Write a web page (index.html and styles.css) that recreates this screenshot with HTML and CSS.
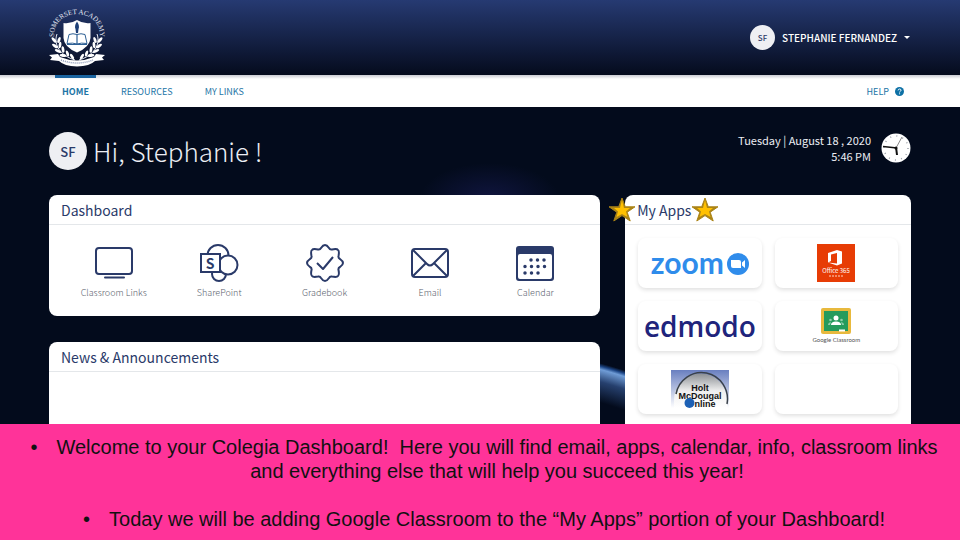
FILE: index.html
```
<!DOCTYPE html>
<html lang="en">
<head>
  <meta charset="UTF-8">
  <meta name="viewport" content="width=device-width, initial-scale=1.0">
  <title>Colegia - Dashboard</title>
  <link rel="stylesheet" href="styles.css">
</head>
<body>
  <header class="top-bar">
    <a class="crest" href="#" aria-label="Somerset Academy">
      <svg width="56" height="58" viewBox="0 0 56 58">
        <defs>
          <path id="crest-arc" d="M5 29C3 -3 53 -3 51 29"/>
          <g id="branch">
            <path d="M8 25C4 36 12 47 26 51" fill="none" stroke="#e8ecf6" stroke-width="1"/>
            <g fill="#fff">
              <ellipse cx="5" cy="31" rx="1.400" ry="3.400" transform="rotate(-40 5 31)"/>
              <ellipse cx="10" cy="31" rx="1.400" ry="3.200" transform="rotate(20 10 31)"/>
              <ellipse cx="6" cy="37" rx="1.400" ry="3.400" transform="rotate(-55 6 37)"/>
              <ellipse cx="11" cy="36" rx="1.400" ry="3.200" transform="rotate(5 11 36)"/>
              <ellipse cx="9" cy="42" rx="1.400" ry="3.400" transform="rotate(-65 9 42)"/>
              <ellipse cx="14" cy="40.500" rx="1.400" ry="3.200" transform="rotate(-8 14 40.500)"/>
              <ellipse cx="14" cy="46.500" rx="1.400" ry="3.400" transform="rotate(-80 14 46.500)"/>
              <ellipse cx="18.500" cy="44.500" rx="1.400" ry="3.200" transform="rotate(-20 18.500 44.500)"/>
              <ellipse cx="23" cy="47.500" rx="1.400" ry="3" transform="rotate(-35 23 47.500)"/>
            </g>
          </g>
        </defs>
        <text class="crest-name"><textPath href="#crest-arc" startOffset="50%" text-anchor="middle">SOMERSET ACADEMY</textPath></text>
        <use href="#branch"/>
        <use href="#branch" transform="translate(56 0) scale(-1 1)"/>
        <path d="M14.500 14Q22 15 28 11Q34 15 41.500 14V29Q41 38 28 43.500Q15 38 14.500 29Z" fill="#fff"/>
        <path d="M20 25.500Q24 24 28 25.500Q32 24 36 25.500L38 34.500Q32 33.500 28 35Q24 33.500 18 34.500Z" fill="#fff" stroke="#2d5f94" stroke-width="1"/>
        <path d="M28 25.500V35M18 35.500H38" stroke="#2d5f94" stroke-width="1.200"/>
        <path d="M28 12.500Q31 17 29.500 20L29 24H27L26.500 20Q25 17 28 12.500Z" fill="#1d3f77"/>
        <path d="M0 46L9 45L11 48Q28 55 45 48L47 45L56 46L53 48.500L55 51L46 52Q41 57 28 57.500Q15 57 10 52L1 51L3 48.500Z" fill="#fff"/>
        <path d="M12 51Q28 57 44 51" fill="none" stroke="#8e9ab8" stroke-width="1.500" stroke-dasharray="1 1"/>
      </svg>
    </a>
    <button class="user-menu" type="button">
      <span class="avatar avatar-small">SF</span>
      <span>STEPHANIE FERNANDEZ</span>
      <svg width="6" height="4" viewBox="0 0 6 4"><path d="M0 0H6L3 3Z" fill="#fff"/></svg>
    </button>
  </header>

  <nav class="nav-bar">
    <a class="active" href="#">HOME</a>
    <a href="#">RESOURCES</a>
    <a href="#">MY LINKS</a>
    <a class="help" href="#">HELP
      <svg width="9" height="9" viewBox="0 0 9 9">
        <circle cx="4.500" cy="4.500" r="4.500" fill="#0d70a5"/>
        <path d="M3.100 3.400Q3.200 2 4.500 2Q6 2 6 3.300Q6 4 4.600 4.900V5.400M4.600 6.300V7.300" fill="none" stroke="#fff" stroke-width="1"/>
      </svg>
    </a>
  </nav>

  <main class="content">
    <div class="greeting">
      <span class="avatar">SF</span>
      <h1>Hi, Stephanie !</h1>
      <div class="date-time">
        <div class="date">Tuesday | August 18 , 2020<br>5:46 PM</div>
        <svg width="30" height="30" viewBox="0 0 30 30">
          <circle cx="15" cy="15" r="14.500" fill="#fff"/>
          <circle cx="15" cy="15" r="12" fill="none" stroke="#9ba0a8" stroke-width="1.500" stroke-dasharray="1 5.283"/>
          <path d="M15 15L21 4" stroke="#888" stroke-width="1"/>
          <path d="M16 15L2 13.500" stroke="#111" stroke-width="1.500"/>
          <path d="M15 14L16 22" stroke="#111" stroke-width="2"/>
          <circle cx="15" cy="15" r="1.500" fill="#111"/>
        </svg>
      </div>
    </div>

    <div class="panels">
      <div class="left-column">
        <section class="card">
          <h2>Dashboard</h2>
          <div class="shortcuts">
            <a href="#">
              <svg width="40" height="40" viewBox="0 0 40 40" fill="none" stroke="#2a3a69" stroke-width="2">
                <rect x="2" y="5" width="36" height="26" rx="3"/>
                <path d="M11 34.500H30" stroke-linecap="round"/>
              </svg>
              Classroom Links
            </a>
            <a href="#">
              <svg width="40" height="40" viewBox="0 0 40 40" fill="#fff" stroke="#2a3a69" stroke-width="2">
                <circle cx="19" cy="12.500" r="10.500"/>
                <circle cx="20" cy="31" r="7"/>
                <circle cx="29" cy="22" r="9.500"/>
                <rect x="2" y="11" width="19" height="18"/>
                <text class="sharepoint-mark" x="11" y="26" text-anchor="middle">S</text>
              </svg>
              SharePoint
            </a>
            <a href="#">
              <svg width="40" height="40" viewBox="0 0 40 40" fill="none" stroke="#2a3a69" stroke-width="2" stroke-linejoin="round">
                <path d="M20 2Q22 2 24 5Q25 7 27 6.500Q32 5.500 33 7Q34.500 8 33.500 13Q33 15 35 16Q38 18 38 20Q38 22 35 24Q33 25 33.500 27Q34.500 32 33 33Q32 34.500 27 33.500Q25 33 24 35Q22 38 20 38Q18 38 16 35Q15 33 13 33.500Q8 34.500 7 33Q5.500 32 6.500 27Q7 25 5 24Q2 22 2 20Q2 18 5 16Q7 15 6.500 13Q5.500 8 7 7Q8 5.500 13 6.500Q15 7 16 5Q18 2 20 2Z"/>
                <path d="M12 20L18 26L28 14"/>
              </svg>
              Gradebook
            </a>
            <a href="#">
              <svg width="40" height="40" viewBox="0 0 40 40" fill="none" stroke="#2a3a69" stroke-width="2">
                <rect x="2" y="6" width="36" height="28" rx="3"/>
                <path d="M3 7L17 21Q20 24 23 21L37 7M3 33L16 20M37 33L24 20"/>
              </svg>
              Email
            </a>
            <a href="#">
              <svg width="40" height="40" viewBox="0 0 40 40" fill="#2a3a69">
                <rect x="1" y="3" width="38" height="35" rx="3"/>
                <rect x="3" y="11" width="34" height="25" rx="2" fill="#fff"/>
                <path d="M16 17H33M10 23.500H33M10 30H24" stroke="#2a3a69" stroke-width="3.500" stroke-linecap="round" stroke-dasharray="0 6.500"/>
              </svg>
              Calendar
            </a>
          </div>
        </section>

        <section class="card news">
          <h2>News &amp; Announcements</h2>
        </section>
      </div>

      <section class="card my-apps">
        <h2>My Apps</h2>
        <svg class="star star-left" width="28" height="26" viewBox="0 0 28 26">
          <path d="M14 1L17.300 9.800H27L19.200 15.200L22.200 24L14 18.600L5.800 24L8.800 15.200L1 9.800H10.700Z" fill="#ab8416" stroke="#ab8416" stroke-width="1"/>
          <path d="M14 3L16 11L22 11L18 14.500L19.500 20L14 17L8.500 20L10 14.500L6 11L12 11Z" fill="#ffc000"/>
        </svg>
        <svg class="star star-right" width="28" height="26" viewBox="0 0 28 26">
          <path d="M14 1L17.300 9.800H27L19.200 15.200L22.200 24L14 18.600L5.800 24L8.800 15.200L1 9.800H10.700Z" fill="#ab8416" stroke="#ab8416" stroke-width="1"/>
          <path d="M14 3L16 11L22 11L18 14.500L19.500 20L14 17L8.500 20L10 14.500L6 11L12 11Z" fill="#ffc000"/>
        </svg>
        <div class="apps">
          <a class="zoom" href="#">
            <span>zoom</span>
            <svg width="22" height="22" viewBox="0 0 22 22">
              <circle cx="11" cy="11" r="11" fill="#2f8ceb"/>
              <path d="M4 7H12Q14 7 14 9V15H6Q4 15 4 13ZM15 9.500L18 7V15L15 12.500Z" fill="#fff"/>
            </svg>
          </a>
          <a href="#" aria-label="Office 365">
            <svg width="38" height="38" viewBox="0 0 38 38">
              <rect width="38" height="38" fill="#e73c05"/>
              <path d="M11 9L20 6L25 7.500V19.500L20 21.500L11 18.500L20 19.500V9L14 10.500V17L11 18.500Z" fill="#fff"/>
              <text class="office-name" x="19" y="29" text-anchor="middle">Office 365</text>
              <path d="M12 32H26" stroke="#ffd5c5" stroke-width="1" stroke-dasharray="2 1"/>
            </svg>
          </a>
          <a class="edmodo" href="#">edmodo</a>
          <a class="classroom" href="#">
            <svg width="30" height="26" viewBox="0 0 30 26">
              <rect width="30" height="26" rx="2" fill="#e8b93d"/>
              <rect x="3" y="3" width="24" height="20" fill="#259b5c"/>
              <circle cx="15" cy="10" r="2.500" fill="#fff"/>
              <path d="M10 17Q10 13.500 15 13.500Q20 13.500 20 17Z" fill="#fff"/>
              <path d="M7 17Q7 14.500 10 14L9 17ZM23 17Q23 14.500 20 14L21 17Z" fill="#8dcdaa"/>
              <circle cx="9.500" cy="12" r="1.300" fill="#8dcdaa"/>
              <circle cx="20.500" cy="12" r="1.300" fill="#8dcdaa"/>
              <rect x="18" y="21.500" width="6" height="2" fill="#fff"/>
            </svg>
            Google Classroom
          </a>
          <a href="#" aria-label="Holt McDougal Online">
            <svg width="58" height="38" viewBox="0 0 58 38">
              <defs>
                <linearGradient id="holt-sky" x2="0" y2="1">
                  <stop offset="0" stop-color="#697fc0"/>
                  <stop offset="1" stop-color="#fff"/>
                </linearGradient>
                <linearGradient id="holt-globe" x2="0" y2="1">
                  <stop offset="0" stop-color="#8b8f94"/>
                  <stop offset="0.500" stop-color="#eee"/>
                  <stop offset="1" stop-color="#fff"/>
                </linearGradient>
              </defs>
              <rect width="58" height="38" fill="url(#holt-sky)"/>
              <path d="M3 38V30A26 26 0 0 1 56 30V38Z" fill="url(#holt-globe)"/>
              <path d="M5 24A25.500 26 0 0 1 56 34" fill="none" stroke="#39414a" stroke-width="1.500"/>
              <g class="holt-name" text-anchor="middle">
                <text x="29" y="21">Holt</text>
                <text x="29" y="29">McDougal</text>
                <text x="34" y="37">nline</text>
              </g>
              <circle cx="18.500" cy="33" r="5" fill="#1c60b5"/>
            </svg>
          </a>
          <a href="#" aria-label="Empty app"></a>
        </div>
      </section>
    </div>
  </main>

  <ul class="notes">
    <li><span>Welcome to your Colegia Dashboard!&nbsp; Here you will find email, apps, calendar, info, classroom links<br>and everything else that will help you succeed this year!</span></li>
    <li><span>Today we will be adding Google Classroom to the “My Apps” portion of your Dashboard!</span></li>
  </ul>
</body>
</html>
```
FILE: styles.css
```
/* General Styles */
* {
  box-sizing: border-box;
}

body {
  margin: 0;
  min-height: 100vh;
  display: flex;
  flex-direction: column;
  font-family: "Noto Sans CJK SC", "Noto Sans", sans-serif;
  color: #2a3a69;
  background: #030b1c;
}

a {
  color: inherit;
  text-decoration: none;
}

svg {
  display: block;
  flex: none;
}

/* Header */
.top-bar {
  display: flex;
  justify-content: space-between;
  align-items: center;
  height: 75px;
  padding: 0 50px 0 49px;
  background: linear-gradient(#263a72, #050b1d);
}

.crest svg {
  overflow: visible;
}

.crest-name {
  font-family: "Liberation Serif", serif;
  font-size: 7px;
  fill: #e8ecf6;
}

.user-menu {
  display: flex;
  align-items: center;
  gap: 7px;
  padding: 0;
  border: none;
  background: none;
  font-family: inherit;
  font-size: 10px;
  line-height: 16px;
  font-weight: 500;
  color: #fff;
}

.avatar {
  display: flex;
  justify-content: center;
  align-items: center;
  width: 38px;
  height: 38px;
  border-radius: 50%;
  background: #eeeff3;
  color: #2a3a69;
  font-size: 13px;
  font-weight: 500;
}

.avatar-small {
  width: 25px;
  height: 25px;
  font-size: 8px;
}

/* Navigation */
.nav-bar {
  display: flex;
  gap: 18px;
  height: 32px;
  padding: 0 49px 0 55px;
  background: linear-gradient(#c9cbd2, #fff 4px);
  color: #1d75a6;
  font-size: 9px;
  line-height: 27px;
}

.nav-bar a {
  padding: 0 7px;
  border-top: 3px solid transparent;
}

.nav-bar .active {
  border-top-color: #1b64a0;
  font-weight: 700;
}

.nav-bar .help {
  display: flex;
  align-items: center;
  gap: 6px;
  margin-left: auto;
  padding-bottom: 2px;
}

/* Page content */
.content {
  flex: 1;
  display: flex;
  flex-direction: column;
  padding: 25px 49px 0;
  background:
    radial-gradient(70px 36px at 51% 92px, #10153f, transparent),
    radial-gradient(circle at 51% 680px, transparent 400px, #26406e 420px, #6f9cd6 432px, #1c4585 435px, transparent 438px),
    #030b1c;
}

.greeting {
  display: flex;
  align-items: center;
  gap: 6px;
  margin-bottom: 25px;
  color: #eceef4;
}

.greeting h1 {
  margin: 0;
  font-size: 26px;
  line-height: 36px;
  font-weight: 300;
}

.date-time {
  display: flex;
  align-items: center;
  align-self: flex-start;
  gap: 10px;
  margin-left: auto;
}

.date {
  font-size: 11px;
  line-height: 16px;
  text-align: right;
}

.panels {
  flex: 1;
  display: grid;
  grid-template-columns: 27fr 14fr;
  gap: 25px;
}

.left-column {
  display: flex;
  flex-direction: column;
  gap: 26px;
}

.card {
  border-radius: 8px;
  background: #fff;
}

.card h2 {
  margin: 0;
  padding: 2px 12px 0;
  border-bottom: 1px solid #e4e7ea;
  font-size: 14px;
  line-height: 27px;
  font-weight: 400;
}

.shortcuts {
  display: grid;
  grid-template-columns: repeat(5, 1fr);
  padding: 18px 12px 16px;
}

.shortcuts a {
  display: flex;
  flex-direction: column;
  align-items: center;
  gap: 3px;
  font-size: 9px;
  line-height: 14px;
  font-weight: 300;
  color: #59606c;
}

.sharepoint-mark {
  font-size: 14px;
  font-weight: 700;
  fill: #2a3a69;
  stroke: none;
}

.news {
  flex: 1;
  border-radius: 8px 8px 0 0;
}

/* My Apps */
.my-apps {
  position: relative;
  border-radius: 8px 8px 0 0;
}

.star {
  position: absolute;
  top: 2px;
}

.star-left {
  left: -17px;
}

.star-right {
  left: 66px;
}

.apps {
  display: grid;
  grid-template-columns: 1fr 1fr;
  gap: 13px;
  padding: 13px 13px 10px;
}

.apps a {
  display: flex;
  justify-content: center;
  align-items: center;
  height: 50px;
  border-radius: 8px;
  box-shadow: 0 2px 4px rgba(0, 0, 0, 0.12);
}

.apps .zoom {
  gap: 3px;
  padding-top: 2px;
  font-family: Lato, sans-serif;
  font-size: 30px;
  line-height: 38px;
  font-weight: 700;
  color: #2f8ceb;
}

.apps .zoom span {
  padding-bottom: 4px;
}

.apps .edmodo {
  font-family: "Open Sans", sans-serif;
  font-size: 28px;
  font-weight: 600;
  color: #20247c;
}

.apps .classroom {
  flex-direction: column;
  gap: 2px;
  font-family: Lato, sans-serif;
  font-size: 6px;
  line-height: 8px;
  color: #555;
}

.office-name {
  font-size: 6px;
  fill: #fff;
}

.holt-name {
  font-family: "Liberation Sans", sans-serif;
  font-size: 9px;
  font-weight: 700;
  fill: #111;
}

/* Notes */
.notes {
  margin: 0;
  padding: 11px 0 9px 8px;
  list-style: none;
  background: #ff3399;
  color: #111;
  font-family: "Liberation Sans", sans-serif;
  font-size: 20px;
  line-height: 24px;
}

.notes li {
  display: flex;
  justify-content: center;
  gap: 19px;
  text-align: center;
}

.notes li + li {
  margin-top: 24px;
}

.notes li::before {
  content: "•";
}
```
